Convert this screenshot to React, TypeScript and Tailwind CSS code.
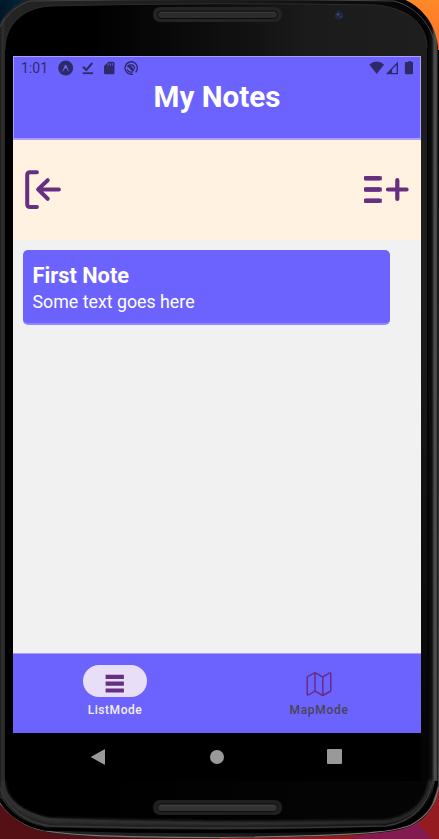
import React from "react";

function DeviceArtwork() {
  return (
    <svg className="absolute inset-0 h-full w-full" viewBox="0 0 439 839" aria-hidden="true">
      <defs>
        <linearGradient id="face" x1="0" x2="1" y1="0" y2="0">
          <stop offset="0.2" stopColor="#000000" />
          <stop offset="0.6" stopColor="#131313" />
          <stop offset="0.72" stopColor="#1b1b1b" />
          <stop offset="1" stopColor="#1e1e1e" />
        </linearGradient>
        <linearGradient id="fade" x1="0" x2="0" y1="0" y2="1">
          <stop offset="0.35" stopColor="#000" stopOpacity="0" />
          <stop offset="0.9" stopColor="#000" stopOpacity="0.85" />
        </linearGradient>
        <linearGradient id="rim" x1="0" x2="439" y1="0" y2="0" gradientUnits="userSpaceOnUse">
          <stop offset="0" stopColor="#1d1d1d" />
          <stop offset="0.006" stopColor="#303030" />
          <stop offset="0.012" stopColor="#242424" />
          <stop offset="0.5" stopColor="#1c1c1c" />
          <stop offset="0.974" stopColor="#030303" />
          <stop offset="0.984" stopColor="#111111" />
          <stop offset="0.989" stopColor="#4c4c4c" />
          <stop offset="0.994" stopColor="#4d4d4d" />
          <stop offset="0.996" stopColor="#111111" />
          <stop offset="1" stopColor="#656565" />
        </linearGradient>
        <linearGradient id="blue" x1="0" x2="1" y1="0" y2="0">
          <stop offset="0" stopColor="#001728" />
          <stop offset="1" stopColor="#00304a" />
        </linearGradient>
        <linearGradient id="orange" x1="0" x2="0" y1="0" y2="1">
          <stop offset="0" stopColor="#ff8927" />
          <stop offset="1" stopColor="#fc6f29" />
        </linearGradient>
        <filter id="soft"><feGaussianBlur stdDeviation="1.6" /></filter>
      </defs>
      <path d="M0 0H40V50H0Z" fill="url(#blue)" />
      <path d="M390 0H439V50H390Z" fill="url(#orange)" />
      <path d="M0 790H220V839H0Z" fill="#541014" />
      <path d="M220 780H439V839H220Z" fill="#941c20" />
      <path d="M350 839L417 822L432 839Z" fill="#841b50" />
      <path
        d="M-1 25C5 13 14 4 28 -1H403C421 6 436 24 438 47L439 787C436 806 426 819 411 826C392 834 350 837 220 838C100 838 60 836 37 830C18 823 7 812 -1 801Z"
        fill="url(#rim)"
      />
      <path d="M0 803C8 814 18 823 37 829C60 835 100 837 220 837.5C350 836 392 833 411 825C426 817 436 805 438.3 787" fill="none" stroke="#777777" strokeWidth="1.2" />
      <path d="M0 799C8 813 22 824 45 829Q220 834 383 829C415 826 433 809 436.5 781" fill="none" stroke="#000" strokeWidth="3.5" />
      <path d="M0 788C8 809 24 822 50 826Q220 830 386 826C412 822 429 805 433 780" fill="none" stroke="#383838" strokeWidth="1.5" />
      <path d="M0 27C7 14 17 5 30 1Q220 -2 394 1C417 7 433 26 436 50" fill="none" stroke="#444444" strokeWidth="1" />
      <path d="M5 50C5 25 22 8 50 6Q220 2 376 5C405 8 427 22 427 48V780C427 803 411 818 384 821Q220 825 50 818C23 812 5 799 5 781Z" fill="url(#face)" />
      <path d="M5 50C5 25 22 8 50 6Q220 2 376 5C405 8 427 22 427 48V780C427 803 411 818 384 821Q220 825 50 818C23 812 5 799 5 781Z" fill="url(#fade)" />
      <path d="M5 50C5 25 22 8 50 6Q220 2 376 5C405 8 427 22 427 48" fill="none" stroke="#2b2b2b" />
      <path d="M3 781C4 802 23 815 50 820Q220 825 384 822C411 819 428 804 431 780" fill="none" stroke="#343434" strokeWidth="4" opacity="0.9" filter="url(#soft)" />
      <circle cx="339" cy="15.5" r="6" fill="#1a1c24" />
      <circle cx="339" cy="15.5" r="4.3" fill="#22263d" />
      <circle cx="338" cy="14.3" r="1.4" fill="#3d466e" />
      <circle cx="341" cy="17" r="1" fill="#333b60" />
      <g>
        <rect x="153" y="7" width="129" height="15" rx="7" fill="#242424" />
        <rect x="157.5" y="11" width="120" height="7.5" rx="3.7" fill="#2c2c2c" stroke="#0c0c0c" />
        <path d="M160 12.5H275" stroke="#393939" />
        <rect x="153" y="800" width="129" height="15" rx="7" fill="#202020" />
        <rect x="157.5" y="804" width="120" height="7.5" rx="3.7" fill="#333333" stroke="#101010" />
        <path d="M160 805.5H275" stroke="#404040" />
      </g>
    </svg>
  );
}

function StatusBar() {
  return (
    <div className="flex h-[21px] items-center pl-[7px] pr-[5px] text-[#2e2a68]">
      <span className="w-9 text-[14px] leading-5">1:01</span>
      <svg className="h-4 w-[84px]" viewBox="0 0 84 16" fill="currentColor">
        <circle cx="8.7" cy="8" r="7.5" />
        <path d="M5 11.2C6.8 9.5 7.4 4.7 8.7 4.7S10.6 9.5 12.4 11.2C11 12.2 10.3 8.2 8.7 8.2S6.4 12.2 5 11.2Z" fill="#6c63ff" />
        <path d="M26 6.8L29.3 10L35.3 3" fill="none" stroke="currentColor" strokeWidth="2" />
        <path d="M25.7 12.3H36v1.8H25.7Z" />
        <path d="M51.5 1.7H56q1.5 0 1.5 1.5V13q0 1.3-1.5 1.3H48.5Q47 14.3 47 13V6Z" />
        <path d="M51.2 3.2V5.6M53.4 3.2V5.6M55.6 3.2V5.6" stroke="#6c63ff" strokeWidth="0.8" />
        <path d="M78.6 12.4A6.2 6.2 0 1 0 74 14.2H76" fill="none" stroke="currentColor" strokeWidth="1.4" />
        <path d="M70.3 7A4 4 0 0 1 77.8 8.6M70.2 9.3A4 4 0 0 0 75.8 11.7" fill="none" stroke="currentColor" strokeWidth="1.3" />
        <path d="M71.5 5.6L76.8 10.8" stroke="currentColor" strokeWidth="2.6" />
      </svg>
      <svg className="ml-auto h-4 w-[46px]" viewBox="0 0 46 16" fill="currentColor">
        <path d="M0.3 4.6Q7.7-1.7 15.1 4.6L7.7 14Z" />
        <path fillRule="evenodd" d="M29 1.6V14.3H16.8ZM27.6 5V12.9H23.1V9.4Z" />
        <path d="M37.5 2.1h1.9V1h2.8v1.1H44V13.2q0 1.1-1.1 1.1H37q-1.1 0-1.1-1.1V3.2q0-1.1 1.1-1.1Z" />
      </svg>
    </div>
  );
}

function LogoutIcon() {
  return (
    <svg className="h-10 w-[38px]" viewBox="0 0 38 40" fill="none" stroke="#662f80" strokeWidth="4" strokeLinecap="round" strokeLinejoin="round">
      <path d="M12.9 2.2H6Q3.2 2.2 3.2 5V34Q3.2 37 6 37H12.9M34.9 19.4H14.5M23.7 10.2L14.1 19.4L23.7 28.8" />
    </svg>
  );
}

function AddNoteIcon() {
  return (
    <svg className="h-[30px] w-[46px]" viewBox="0 0 46 30" fill="none" stroke="#662f80" strokeWidth="4" strokeLinecap="round">
      <path d="M2.2 3.3H16.8M2.2 14.5H16.8M2.2 25.7H16.8" strokeLinecap="butt" strokeWidth="4.6" />
      <path d="M1 3.3H18.8M1 14.5H18.8M1 25.7H18.8" strokeLinecap="butt" strokeWidth="4" />
      <path d="M25 14.5H43.6M34.3 5.2V24" strokeWidth="4.2" />
    </svg>
  );
}

export default function App() {
  return (
    <div className="relative flex h-[839px] w-[439px] flex-col overflow-hidden bg-black pl-[13px] pr-[18px] pt-14 font-['Roboto',sans-serif]">
      <DeviceArtwork />
      <main className="relative flex h-[725px] w-[408px] flex-col bg-black">
        <header className="h-[84px] shrink-0 border border-b-2 border-[#aaa0ff] bg-[#6c63ff]">
          <StatusBar />
          <h1 className="-mt-px text-center text-[29.6px] font-bold leading-[40px] text-white">My Notes</h1>
        </header>
        <div className="flex h-[100px] shrink-0 items-center justify-between bg-[#fff2e0] pl-[11px] pr-[12px]">
          <button aria-label="Log out"><LogoutIcon /></button>
          <button aria-label="Add note"><AddNoteIcon /></button>
        </div>
        <section className="min-h-0 flex-1 bg-[#f1f1f1] pl-[10px] pt-[10px]">
          <article className="h-[75px] w-[367px] rounded-[5px] border-b-2 border-[#8f87ff] bg-[#6c63ff] px-[9.5px] pt-[12px] text-white">
            <h2 className="text-[21.8px] font-bold leading-[28px]">First Note</h2>
            <p className="text-[17.8px] leading-6">Some text goes here</p>
          </article>
        </section>
        <nav className="grid h-[80px] shrink-0 grid-cols-2 border-t border-[#aaa0ff] bg-[#6c63ff] text-xs font-medium">
          <button className="flex flex-col items-center pt-[11px] text-[#f5efe8]">
            <span className="flex h-8 w-16 items-center justify-center rounded-full bg-[#e8def8]">
              <svg className="mt-[4px] h-[19px] w-[20px]" viewBox="0 0 20 19">
                <path d="M0.6 0.7H18.9V4.9H0.6ZM0.6 7.6H18.9V11.7H0.6ZM0.6 14.5H18.9V18.5H0.6Z" fill="#662f80" />
              </svg>
            </span>
            <span className="mt-[5px] leading-4 tracking-[0.55px]">ListMode</span>
          </button>
          <button className="flex flex-col items-center pt-[11px] text-[#49454f]">
            <span className="flex h-8 items-center justify-center">
              <svg className="mt-[6px] h-[26px] w-[26px]" viewBox="0 0 26 26" fill="none" stroke="#642f83" strokeWidth="1.5" strokeLinejoin="round">
                <path d="M1.2 6.3V23.1Q1.2 24.5 2.6 23.8L9 20.1L16.8 24.5L24 20.5Q24.8 20 24.8 19V3Q24.8 1.3 23.2 2.2L16.8 6L9 1.6L2 5.4Q1.2 5.8 1.2 6.3ZM9 1.6V20.1M16.8 6V24.5" />
              </svg>
            </span>
            <span className="mt-[5px] leading-4 tracking-[0.7px]">MapMode</span>
          </button>
        </nav>
        <footer className="flex h-12 shrink-0 items-center justify-between pl-[77px] pr-[79px]">
          <svg className="h-4 w-4" viewBox="0 0 16 16"><path d="M0.7 8L14.1 0.4Q15 0 15 1V15Q15 16 14.1 15.6Z" fill="#999" /></svg>
          <span className="h-[14px] w-[14px] rounded-full bg-[#999]" />
          <span className="-mt-px h-[15px] w-[15px] rounded-[1px] bg-[#999]" />
        </footer>
      </main>
    </div>
  );
}
